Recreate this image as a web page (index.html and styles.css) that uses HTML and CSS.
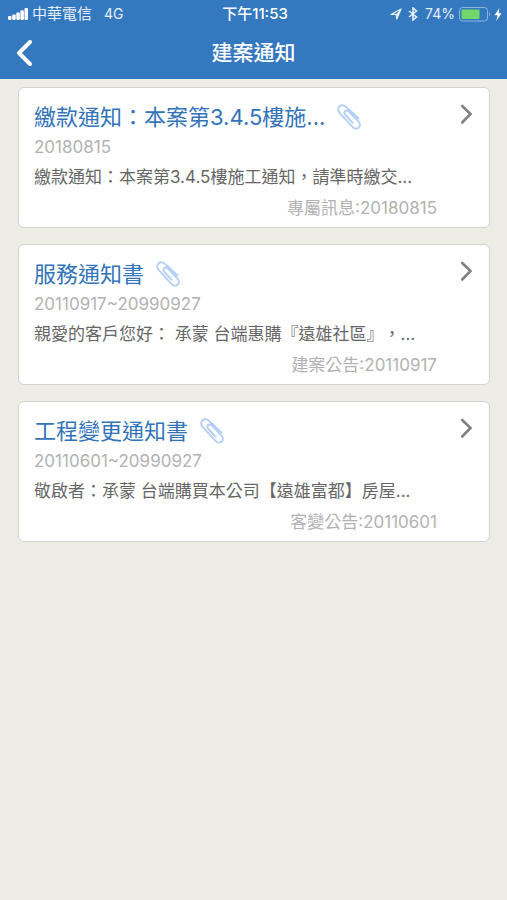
FILE: index.html
```html
<!DOCTYPE html>
<html lang="zh-Hant">
<head>
<meta charset="utf-8">
<meta name="viewport" content="width=device-width, initial-scale=1">
<title>建案通知</title>
<link rel="stylesheet" href="styles.css">
</head>
<body>
<svg class="defs" aria-hidden="true">
  <symbol id="clip" viewBox="0 0 24 26">
    <path d="M13 6.500L8.500 2.600C6 .6 3.400 1 2 3C.6 5 1 7 2.600 8.800L15.500 22.800C17.500 25 20 25.200 21.700 23.500C23.500 21.700 23.200 19.600 21.500 17.700L12 7.500C10.600 6.200 9 6.200 8 7.300C7 8.400 7.200 9.700 8.300 11L15.800 18.800M13 6.500L21.500 14.500" fill="none" stroke="currentColor" stroke-width="1.900" stroke-linecap="round" stroke-linejoin="round"/>
  </symbol>
  <symbol id="chevron" viewBox="0 0 14 22">
    <path d="M3.200 3L11.500 11L3.200 19.500" fill="none" stroke="currentColor" stroke-width="2.600" stroke-linecap="round"/>
  </symbol>
</svg>
<header class="header">
  <div class="status">
    <div class="status-left">
      <svg class="signal" viewBox="0 0 20 12" fill="currentColor" aria-hidden="true">
        <rect x="0" y="8" width="3.500" height="4" rx="1"/><rect x="4.200" y="6.500" width="3.500" height="5.500" rx="1"/><rect x="8.300" y="4.500" width="3.500" height="7.500" rx="1"/><rect x="12.400" y="2.300" width="3.500" height="9.700" rx="1"/><rect x="16.500" y="0" width="3.500" height="12" rx="1"/>
      </svg>
      <span class="carrier">中華電信</span>
      <span>4G</span>
    </div>
    <div class="clock">下午11:53</div>
    <div class="status-right">
      <svg class="location" viewBox="0 0 12 12" aria-hidden="true"><path d="M1 6.500L11 1L6.800 11L6 6.300Z" fill="none" stroke="currentColor" stroke-width="1.200" stroke-linejoin="round"/><path d="M6 6.300L11 1L6.800 11Z" fill="currentColor"/></svg>
      <svg class="bluetooth" viewBox="0 0 10 14" aria-hidden="true"><path d="M1 4L8.500 10L5 13V1L8.500 4L1 10" fill="none" stroke="currentColor" stroke-width="1.600"/></svg>
      <span class="percent">74%</span>
      <svg class="battery" viewBox="0 0 32 15" aria-hidden="true"><rect x="0.500" y="0.500" width="28" height="13.500" rx="3" fill="none" stroke="#8fb6dd"/><rect x="2.500" y="2.500" width="18" height="9.500" rx="1" fill="#72d66b"/><path d="M30 5Q32 7.200 30 9.500Z" fill="#8fb6dd"/></svg>
      <svg class="bolt" viewBox="0 0 8 13" aria-hidden="true"><path d="M5.500 0L0.500 7.300H3.500L2.300 13L7.500 5.300H4.600Z" fill="currentColor"/></svg>
    </div>
  </div>
  <nav class="navbar">
    <button class="back" type="button" aria-label="返回">
      <svg viewBox="0 0 18 28" aria-hidden="true"><path d="M15 3L4 14L15 25" fill="none" stroke="currentColor" stroke-width="4" stroke-linecap="round" stroke-linejoin="round"/></svg>
    </button>
    <h1>建案通知</h1>
  </nav>
</header>
<main class="list">
  <a class="card" href="#notice-1">
    <div class="content">
      <h2><span>繳款通知：本案第3.4.5樓施...</span><svg class="clip" aria-hidden="true"><use href="#clip"/></svg></h2>
      <p class="date">20180815</p>
      <p class="summary">繳款通知：本案第3.4.5樓施工通知，請準時繳交...</p>
      <p class="meta">專屬訊息:20180815</p>
    </div>
    <svg class="chevron" aria-hidden="true"><use href="#chevron"/></svg>
  </a>
  <a class="card" href="#notice-2">
    <div class="content">
      <h2><span>服務通知書</span><svg class="clip" aria-hidden="true"><use href="#clip"/></svg></h2>
      <p class="date">20110917~20990927</p>
      <p class="summary">親愛的客戶您好： 承蒙 台端惠購『遠雄社區』，...</p>
      <p class="meta">建案公告:20110917</p>
    </div>
    <svg class="chevron" aria-hidden="true"><use href="#chevron"/></svg>
  </a>
  <a class="card" href="#notice-3">
    <div class="content">
      <h2><span>工程變更通知書</span><svg class="clip" aria-hidden="true"><use href="#clip"/></svg></h2>
      <p class="date">20110601~20990927</p>
      <p class="summary">敬啟者：承蒙 台端購買本公司【遠雄富都】房屋...</p>
      <p class="meta">客變公告:20110601</p>
    </div>
    <svg class="chevron" aria-hidden="true"><use href="#chevron"/></svg>
  </a>
</main>
</body>
</html>
```
FILE: styles.css
```css
* { box-sizing: border-box; }
body {
  margin: 0;
  min-height: 100vh;
  background: #edece5;
  font-family: Inter, "Noto Sans CJK TC", sans-serif;
  text-spacing-trim: space-all;
}
h1, h2, p { margin: 0; font-weight: 400; }
svg { display: block; flex: none; }
.defs { position: absolute; width: 0; height: 0; }
.header { background: #3478c0; color: #fff; }
.status {
  display: grid;
  grid-template-columns: 1fr auto 1fr;
  align-items: center;
  height: 28px;
  padding: 0 5px 0 8px;
  font-size: 14px;
  line-height: 28px;
  white-space: nowrap;
}
.status-left, .status-right { display: flex; align-items: center; color: #e6effa; }
.status-right { justify-content: flex-end; }
.signal { width: 20px; height: 12px; margin-right: 4px; color: #fff; }
.carrier { margin-right: 12px; font-size: 15px; }
.clock { font-size: 15px; font-weight: 500; }
.location { width: 12px; height: 12px; margin-right: 6px; }
.bluetooth { width: 10px; height: 14px; margin-right: 7px; }
.percent { margin-right: 4px; }
.battery { width: 32px; height: 15px; margin-right: 3px; }
.bolt { width: 8px; height: 13px; color: #fff; }
.navbar {
  display: grid;
  grid-template-columns: 48px 1fr 48px;
  align-items: center;
  height: 51px;
  padding-bottom: 2px;
}
.navbar h1 { font-size: 21px; line-height: 30px; font-weight: 500; text-align: center; }
.back { border: 0; padding: 0 0 0 15px; background: none; color: #fff; }
.back svg { width: 18px; height: 28px; }
.list { display: flex; flex-direction: column; gap: 16px; padding: 8px 17px 8px 18px; }
.card {
  display: flex;
  justify-content: space-between;
  padding: 11px 16px 6px 15px;
  border: 1px solid #d3d3d1;
  border-radius: 6px;
  background: #fff;
  color: #666;
  text-decoration: none;
}
.content { flex: 1; min-width: 0; margin-right: 22px; }
.content h2 {
  display: flex;
  align-items: center;
  gap: 12px;
  font-size: 22px;
  line-height: 36px;
  color: #3273b9;
  white-space: nowrap;
}
.clip { width: 24px; height: 26px; color: #b5d0f5; }
.date { font-size: 17px; line-height: 24px; color: #b2b2b2; }
.summary { font-size: 17px; line-height: 36px; white-space: nowrap; }
.meta { font-size: 17px; line-height: 26px; color: #b2b2b2; text-align: right; }
.chevron { width: 14px; height: 22px; margin-top: 4px; color: #808080; }
```
